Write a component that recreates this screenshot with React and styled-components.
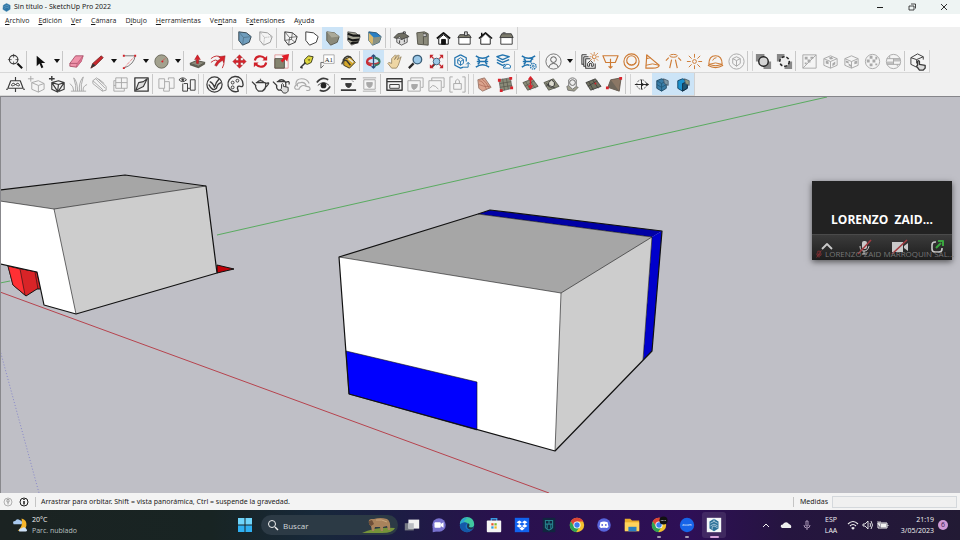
import React from "react"
import { useState } from "react";
import styled, { createGlobalStyle } from "styled-components";

const GlobalStyle = createGlobalStyle`
  * {
    box-sizing: border-box;
  }

  body {
    margin: 0;
    background: #f0f0f0;
    color: #1b1b1b;
    font-family: "Open Sans", "Noto Sans", sans-serif;
    font-size: 7px;
    line-height: 10px;
  }

  button, input {
    font: inherit;
    color: inherit;
  }
`

const Window = styled.div`
  display: flex;
  flex-direction: column;
  min-height: 100vh;
`

const TitleBar = styled.header`
  display: flex;
  align-items: center;
  gap: 3px;
  height: 14px;
  padding: 0 2px;
  background: #eef4f3;

  h1 {
    flex: 1;
    margin: 0;
    font-family: "Noto Sans", "Open Sans", sans-serif;
    font-size: 7px;
    font-weight: 400;
  }
`

const PlainButton = styled.button`
  display: flex;
  align-items: center;
  justify-content: center;
  border: none;
  padding: 0;
  background: transparent;
  cursor: pointer;
`

const WindowButton = styled(PlainButton)`
  width: 29px;
  height: 14px;

  &:hover {
    background: #dde5e4;
  }
`

const MenuBar = styled.nav`
  display: flex;
  align-items: center;
  gap: 9px;
  height: 13px;
  padding: 0 5px;
  background: #ffffff;

  a {
    color: inherit;
    text-decoration: none;
  }
`

const ToolRow = styled.div`
  display: flex;
  height: 23px;
  padding-left: ${({ $indent }) => $indent || 0}px;
`

const ToolStrip = styled.div`
  display: flex;
  align-items: center;
  padding-left: ${({ $start }) => $start}px;
  background: #f4f4f4;
  border-right: 1px solid #d2d2d2;
  border-bottom: 1px solid #d8d8d8;
  border-left: ${({ $edge }) => ($edge ? '1px solid #d2d2d2' : 'none')};
`

const ToolButton = styled(PlainButton)`
  width: 21px;
  height: 22px;
  color: ${({ $tone }) => $tone || '#3a3a3a'};
  background: ${({ $active }) => ($active ? '#cce4f7' : 'transparent')};

  &:hover {
    background: #dcebf7;
  }
`

const Caret = styled(PlainButton)`
  width: 11px;
  height: 22px;

  &::before {
    content: "";
    border: 3px solid transparent;
    border-top: 4px solid #111111;
    border-bottom: none;
  }
`

const Separator = styled.span`
  width: ${({ $wide }) => ($wide ? 6 : 4)}px;
  height: 20px;
  border-left: 1px solid #c8c8c8;
  border-right: ${({ $wide }) => ($wide ? '1px solid #d4d4d4' : 'none')};
`

const Glyph = styled.svg`
  display: block;
  flex: none;
  width: ${({ $size }) => $size || 20}px;
  height: ${({ $size }) => $size || 20}px;
  fill: none;
  stroke: currentColor;
  stroke-width: 1;
  stroke-linejoin: round;
`

const Viewport = styled.main`
  position: relative;
  flex: 1;
  display: flex;
  min-height: 300px;
  border-top: 1px solid #85858a;
  border-left: 1px solid #88888c;
  background: #bfbfc6;
`

const Scene = styled.svg`
  flex: 1;
  width: 100%;
  min-width: 0;
  stroke-linejoin: round;
`

const CallCard = styled.section`
  position: absolute;
  top: 84px;
  right: 8px;
  display: flex;
  flex-direction: column;
  width: 140px;
  height: 79px;
  background: #222222;
  color: #ffffff;
  box-shadow: 0 2px 6px rgba(0, 0, 0, 0.55);

  h2 {
    flex: 1;
    margin: 0;
    padding-top: 26px;
    font-size: 12px;
    line-height: 26px;
    font-weight: 700;
    text-align: center;
    white-space: pre;
  }
`

const CallControls = styled.div`
  display: flex;
  align-items: center;
  justify-content: space-between;
  height: 26px;
  padding: 0 5px 2px;
  border-top: 1px solid #4a4a4a;
  background: linear-gradient(#3b3b3b, #1d1d1d);
  color: #c9c9c9;
`

const CallName = styled.span`
  position: absolute;
  right: 2px;
  bottom: 1px;
  left: 3px;
  display: flex;
  align-items: center;
  gap: 2px;
  color: #777777;
  font-size: 8px;
  line-height: 11px;
  white-space: nowrap;
`

const StatusBar = styled.footer`
  display: flex;
  align-items: center;
  gap: 6px;
  height: 17px;
  padding: 0 3px;
  background: #f3f3f3;
  font-family: "Noto Sans", "Open Sans", sans-serif;

  p {
    flex: 1;
    margin: 0;
    padding-left: 5px;
    border-left: 1px solid #c4c4c4;
  }

  label {
    padding-left: 6px;
    border-left: 1px solid #c4c4c4;
  }

  input {
    width: 125px;
    height: 12px;
    margin-left: -2px;
    padding: 0 2px;
    border: 1px solid #d4d8dc;
    background: #f0f0f0;
  }
`

const Taskbar = styled.footer`
  display: grid;
  grid-template-columns: 1fr auto 1fr;
  align-items: center;
  height: 30px;
  background: linear-gradient(90deg, #1b2322 0%, #182423 22%, #17283a 33%, #1d1c44 42%, #29114d 52%, #2e0f56 72%, #25153f 82%, #221a34 100%);
  color: #f2f2f2;
  line-height: 11px;
`

const Weather = styled.div`
  display: flex;
  align-items: center;
  gap: 4px;
  padding-left: 12px;

  small {
    display: block;
    font-size: 7px;
    color: #b9c0c0;
  }
`

const Dock = styled.div`
  display: flex;
  align-items: center;
`

const StartButton = styled(PlainButton)`
  width: 29px;
  height: 26px;
  padding-right: 3px;
`

const SearchBox = styled.label`
  display: flex;
  align-items: center;
  gap: 4px;
  width: 137px;
  height: 20px;
  padding: 0 2px 0 6px;
  border-radius: 10px;
  background: #2c3a45;

  input {
    flex: 1;
    min-width: 0;
    border: none;
    padding: 0;
    background: transparent;
    font-size: 8px;
    outline: none;
  }

  input::placeholder {
    color: #d2d7da;
    opacity: 1;
  }
`

const Apps = styled.div`
  display: grid;
  grid-template-columns: repeat(12, 1fr);
  justify-items: center;
  width: 330px;
`

const AppButton = styled(PlainButton)`
  position: relative;
  width: 24px;
  height: 26px;
  border-radius: 3px;
  background: ${({ $state }) => ($state === 'active' ? 'rgba(255, 255, 255, 0.1)' : 'transparent')};

  &::after {
    content: "";
    position: absolute;
    bottom: 0;
    width: ${({ $state }) => ($state === 'active' ? 9 : 4)}px;
    height: 2px;
    border-radius: 1px;
    background: ${({ $state }) => ($state === 'active' ? '#d9a6dd' : '#a79db2')};
    display: ${({ $state }) => ($state ? 'block' : 'none')};
  }
`

const Tray = styled.div`
  display: flex;
  align-items: center;
  justify-content: flex-end;
  padding-right: 12px;
  text-align: center;

  time {
    width: 44px;
    margin-right: 4px;
    text-align: right;
  }
`

const TrayButton = styled(PlainButton)`
  width: ${({ $width }) => $width || 15}px;
  height: 22px;
`

const Badge = styled.span`
  width: 10px;
  height: 10px;
  border-radius: 5px;
  background: #cf9ad6;
  color: #3c2050;
  font-size: 7px;
  line-height: 10px;
`

const box = 'M4 3L12 4L17 8L15 14L8 17L4 12Z'
const boxEdges = 'M4 3L9 9L8 17M9 9L17 8'
const cube = 'M3 7L10 4L17 7V14L10 17L3 14ZM3 7L10 10L17 7M10 10V17'
const terrain = 'M2 8L12 4L18 12L7 16Z'

const icons = {
  xray: <><path d={box} fill="#6f9dbd" stroke="#34444f" /><path d={boxEdges} stroke="#4f7288" strokeWidth="0.8" /></>,
  backEdges: <><path d={box} stroke="#9a9a9a" /><path d={boxEdges} stroke="#a8a8a8" strokeDasharray="1 1" /></>,
  wireframe: <><path d={box} /><path d="M4 3L9 9L8 17M9 9L17 8M4 12L11 11L15 14M11 11L12 4" strokeWidth="0.7" /></>,
  hiddenLine: <path d={box} fill="#fff" />,
  shaded: <><path d={box} fill="#8b8a7b" stroke="#5d5c50" /><path d="M4 3L12 4L17 8L9 9Z" fill="#aaa999" stroke="none" /></>,
  textures: <><path d={box} fill="#a5a495" stroke="#444" strokeWidth="0.8" /><path d="M4 5L10 7L17 7M4 10L9 12L16 11M7 15L15 14" stroke="#161616" strokeWidth="2.2" /></>,
  monochrome: <><path d={box} fill="#2a7fc4" stroke="#2b5878" /><path d="M4 4L9 9L8 17L4 12Z" fill="#d9b96d" stroke="none" /><path d="M9 9L17 8L15 14L8 17Z" fill="#8c9282" stroke="none" /></>,
  iso: <><path d="M5 9V14L10 17L16 14V8L10 11Z" fill="#ddd" strokeWidth="0.8" /><path d="M2 9L6 5L12 4L18 8L10 11L8 8L5 10Z" fill="#6f6e62" strokeWidth="0.8" /><path d="M12 5V3H14V5M8 12V15M13 11V14" /></>,
  top: <><path d="M4 4L12 3L16 5V17L5 16Z" fill="#8b8a7b" stroke="#55544a" /><path d="M11 4V16" stroke="#55544a" /><path d="M11 5H14V8H11" fill="#ccc" strokeWidth="0.8" /></>,
  front: <><path d="M3 10L10 4L17 10" strokeWidth="1.8" stroke="#111" /><path d="M5 10V16H15V10L10 6Z" fill="#fff" stroke="#111" /><path d="M8 16V11H12V16Z" fill="#111" stroke="#111" /></>,
  right: <><path d="M4 9V16H16V9" fill="#fff" /><path d="M3 9L5 6H15L17 9Z" fill="#7d7c6d" /><path d="M10 7V3H13V7Z" fill="#ccc" /></>,
  back: <><path d="M5 10V16H15V10L10 5Z" fill="#fff" stroke="#222" /><path d="M3 10L10 4L17 10M6 7V4" strokeWidth="1.5" stroke="#111" /></>,
  left: <><path d="M4 9V16H16V9" fill="#fff" /><path d="M3 9L5 5H15L17 9Z" fill="#7d7c6d" /><path d="M6 4H9" /></>,

  search: <><circle cx="8" cy="8" r="4.5" strokeWidth="1.2" /><path d="M8 2V6M8 10V13M2 8H6M10 8H13" strokeWidth="0.8" /><path d="M12 12L17 17" strokeWidth="2.2" stroke="#111" /></>,
  select: <path d="M6 4V15L9 12L11 17L13 16L11 11.500H15Z" fill="#111" stroke="none" />,
  eraser: <><path d="M3 12L9 4H17L15 10L10 16L3 15Z" fill="#ef92aa" stroke="#9b3f58" strokeWidth="0.8" /><path d="M3 12L11 12L17 4M11 12L10 16" stroke="#a34a63" strokeWidth="0.8" /><path d="M11 12L17 4L15 10L10 16Z" fill="#d9708d" stroke="none" /></>,
  pencil: <><path d="M3 17L5 12L14 4L16 6L8 14Z" fill="#c9262c" stroke="#6d2222" strokeWidth="0.8" /><path d="M3 17L5 12L8 14Z" fill="#333" stroke="none" /></>,
  arc: <><path d="M4 4H16Q15 13 4 17" stroke="#555" strokeWidth="0.8" /><path d="M4 17L15 5" stroke="#d94a50" strokeDasharray="1 1" /><path d="M3 3H5V5H3ZM15 3H17V5H15ZM3 16H5V18H3Z" fill="#d62128" stroke="none" /></>,
  circle: <><circle cx="10" cy="10" r="7" fill="#a3a28f" stroke="#6d6c5f" /><path d="M10 10L15 6" stroke="#d94a50" strokeDasharray="1 1" /><circle cx="11" cy="10" r="1" fill="#d62128" stroke="none" /></>,
  pushPull: <><path d="M2 12L9 9L18 11L11 15Z" fill="#8b8a7b" stroke="#55544a" /><path d="M2 12V14L11 17L18 13V11L11 15Z" fill="#5f5e52" stroke="none" /><path d="M9 12V8H7L10 3L13 8H11V12Z" fill="#d9222b" stroke="#9c151c" strokeWidth="0.5" /></>,
  followMe: <><path d="M2 7Q8 2 13 6M2 11Q8 6 10 11M15 9Q17 12 14 17" stroke="#c32a30" /><path d="M6 14Q8 9 12 7L10 5L17 4L16 11L14 9Q10 11 8 15Z" fill="#d9222b" stroke="#8e2a2e" strokeWidth="0.5" /></>,
  move: <path d="M10 3L13 6H11V9H14V7L17 10L14 13V11H11V14H13L10 17L7 14H9V11H6V13L3 10L6 7V9H9V6H7Z" fill="#d9222b" stroke="#9c151c" strokeWidth="0.5" />,
  rotate: <><path d="M4 9C5 4 11 3 15 7M16 11C15 16 9 17 5 13" stroke="#cf2029" strokeWidth="2.2" /><path d="M17 4V9H12ZM3 16V11H8Z" fill="#cf2029" stroke="none" /></>,
  scale: <><path d="M3 3H17V17H3Z" stroke="#dd8588" strokeWidth="0.8" /><path d="M3 7H13V17H3Z" fill="#85846f" stroke="#55544a" /><path d="M9 9L12 6L10 4L18 2L16 10L14 8L11 11Z" fill="#e01d27" stroke="none" /></>,
  tape: <><path d="M8 8L12 4L17 5L15 11L11 13L8 12Z" fill="#ddd63e" stroke="#3c3b20" /><path d="M11 8L14 7L13 10Z" fill="#77721f" stroke="none" /><path d="M9 11L4 16L6 17" stroke="#333" strokeWidth="1.6" /></>,
  text: <><path d="M6 3H17V12H6Z" fill="#fff" stroke="#999" strokeWidth="0.8" /><path d="M3 17V11H6M3 17L6 14" stroke="#666" /><text x="7" y="10" fontSize="7" fontFamily="Liberation Serif, serif" fill="#222" stroke="none">A1</text></>,
  paint: <><path d="M5 8L12 5L17 11L11 17L5 14Z" fill="#d4a72c" stroke="#3d3824" /><path d="M4 9Q8 2 13 6M3 13Q4 8 8 9L12 14" stroke="#3a3a33" strokeWidth="1.5" /><path d="M10 7L15 11" stroke="#e8e6da" strokeWidth="1.6" /></>,
  orbit: <><path d="M8 14C1 13 2 7 9 6" stroke="#c92d35" strokeWidth="2.4" /><path d="M11 6C18 7 18 13 11 14" stroke="#34795d" strokeWidth="2.4" /><path d="M4 11Q10 14 16 11" stroke="#b94046" strokeWidth="1.4" /><path d="M10 3V17M8 5L10 3L12 5M8 15L10 17L12 15" stroke="#254a78" strokeWidth="1.4" /></>,
  pan: <path d="M7 17L3 12L4 11L7 12L7 7L11 3L12 4L10 8L14 3L15 4L13 8L17 5L14 14L12 17Z" fill="#eed6a4" stroke="#8d7a54" strokeWidth="0.8" />,
  zoom: <><path d="M8 12L3 17" stroke="#282828" strokeWidth="2.4" /><circle cx="12" cy="8" r="4.500" fill="#9cc9e8" stroke="#3b5e78" strokeWidth="1.4" /></>,
  zoomExtents: <><path d="M9 12L5 16" stroke="#333" strokeWidth="2" /><circle cx="10" cy="10" r="3.500" fill="#9cc9e8" stroke="#476176" /><path d="M3 3H7L3 7ZM17 3V7L13 3ZM3 17V13L7 17ZM17 17H13L17 13Z" fill="#c3242b" stroke="none" /><path d="M4 4L7 7M16 4L13 7M4 16L7 13M16 16L13 13" stroke="#c3242b" strokeWidth="1.4" /></>,
  warehouse: <><path d="M9 3L15 6V10M9 3L3 6V14L9 17L12 16" strokeWidth="1.3" /><path d="M9 6L12 8V12L9 14L6 12V8ZM6 8L9 10L12 8M9 10V14" /><path d="M12 16H17V11M15 13L17 11L19 13" /></>,
  extWarehouse: <path d="M3 4Q10 9 17 4M3 16Q10 11 17 16M4 10H16M5 7Q9 10 5 13M15 7Q11 10 15 13" strokeWidth="1.6" />,
  layout: <><path d="M3 5L9 3L16 5L9 8ZM3 8L9 11L16 8M3 11L9 14L12 13" strokeWidth="1.4" /><path d="M10 17H17Q19 14 15 13Q12 12 12 15Q9 15 10 17Z" fill="#fff" /></>,
  extManager: <><path d="M3 4Q10 9 17 4M3 16Q8 12 11 14M4 10H12M5 7Q9 10 5 13M15 7Q11 9 13 11" strokeWidth="1.6" /><circle cx="15" cy="15" r="3" fill="#f5f5f5" strokeDasharray="1.5 0.8" strokeWidth="1.4" /><circle cx="15" cy="15" r="1" /></>,
  person: <><circle cx="10" cy="10" r="8" strokeWidth="0.8" /><circle cx="10" cy="8" r="3" /><path d="M5 16Q6 12 10 12T15 16" /></>,
  lightGen: <><path d="M4 5V15H6M2 3V13H4M11 7H6V17H16V12M9 5H4M7 3H2" strokeWidth="1.1" /><path d="M8 15V12L11 9L14 12V15H12V12H10V15Z" /><g stroke="#cd7a33"><circle cx="15" cy="5" r="2" /><path d="M15 0V2M15 8V10M10 5H12M18 5H20M11 1L13 3M17 7L19 9M19 1L17 3M11 9L13 7" strokeWidth="0.8" /></g></>,
  rectLight: <path d="M2 4H18L15 11H5ZM10 7V17M8 15L10 17L12 15" strokeWidth="1.2" />,
  sphereLight: <><circle cx="10" cy="10" r="8" strokeWidth="1.2" /><circle cx="10" cy="9" r="5" strokeWidth="1.2" /><path d="M5 11Q10 16 15 11" /></>,
  spotLight: <><path d="M4 3L17 14Q17 17 10 17H3Z" strokeWidth="1.2" /><path d="M3 14Q10 11 17 14M4 3V7L8 6" /></>,
  iesLight: <><ellipse cx="10" cy="4" rx="4" ry="1.5" /><path d="M5 6L2 9M15 6L18 9M8 8L6 17M12 8L14 17" strokeWidth="1.2" /></>,
  omniLight: <><circle cx="10" cy="10" r="2" /><path d="M10 2V6M10 14V18M2 10H6M14 10H18M4 4L7 7M13 13L16 16M16 4L13 7M7 13L4 16" /></>,
  domeLight: <><path d="M3 13Q3 4 10 4T17 13Q10 16 3 13ZM2 14Q10 19 18 14" strokeWidth="1.2" /><path d="M3 13Q10 10 17 13M7 9Q8 6 11 6" /></>,
  meshLight: <><circle cx="10" cy="10" r="8" /><path d="M6 7L10 5L14 7V12L10 15L6 12ZM6 7L10 9L14 7M10 9V15" /></>,
  solidBlend: <><path d="M2 2H11V10H2ZM10 10H18V18H10Z" fill="#898989" stroke="none" /><circle cx="10" cy="10" r="5" fill="#d5d5d5" strokeWidth="1.5" stroke="#222" /></>,
  dashBlend: <><path d="M2 2H10V10H2ZM10 10H18V18H10Z" fill="#898989" stroke="none" /><circle cx="10" cy="10" r="5" fill="#ededed" strokeDasharray="3 2" strokeWidth="1.6" stroke="#222" /></>,
  planeUv: <><path d="M3 3H17V17H3ZM3 17L17 3" /><path d="M5 5H8V8H5ZM8 8H11V11H8ZM11 5H14V7H11ZM5 11H7V13H5Z" fill="currentColor" stroke="none" /></>,
  cubeUv: <><path d={cube} /><path d="M5 9L8 10V13L5 12ZM12 12L15 10V13L12 15ZM8 6L11 5L13 7L10 8Z" fill="currentColor" stroke="none" /></>,
  boxUv: <><path d={cube} /><path d="M4 9L7 10V12L4 11ZM7 12L10 14V16L7 14ZM13 10L16 9V12L13 13Z" fill="currentColor" stroke="none" /></>,
  sphereUv: <><circle cx="10" cy="10" r="7.500" /><path d="M7 4H10V7H7ZM4 8H7V11H4ZM10 8H13V11H10ZM7 12H10V15H7ZM13 5H15V8H13ZM13 12H15V14H13Z" fill="currentColor" stroke="none" /></>,
  roundUv: <><circle cx="10" cy="10" r="7.500" /><path d="M3 7H17M3 13H17M6 4V7M10 7V13M14 13V15" /><path d="M10 7H17V10H10ZM3 10H10V13H3Z" fill="currentColor" stroke="none" opacity="0.7" /></>,
  pickCube: <><path d="M2 6L9 2L15 5V8M2 6V13L8 16M2 6L8 8L15 5M8 8V12" /><path d="M9 10Q10 8 11 10V13L17 14V17L15 19H11L8 15L9 14Z" fill="#ddd" strokeWidth="1.4" /></>,

  infinitePlane: <><path d="M5 6H15L18 14H2ZM10 2V6M10 14V18M2 15H0M18 15H20" strokeWidth="1.2" /><path d="M10 10Q7 7 6 10T10 10Q13 7 14 10T10 10" /></>,
  exportProxy: <><path d="M5 8L12 6L18 9V15L12 18L5 15ZM5 8L12 11L18 9M12 11V18" /><path d="M4 1V7M1 4H7" /></>,
  importProxy: <><path d="M4 8L11 6L17 8V15L10 18L4 15ZM4 8L11 10L17 8M11 10L10 18M4 8L10 17M11 17L17 8" strokeWidth="1.2" /><path d="M4 1V6M1 4H7" strokeWidth="1.5" /></>,
  fur: <path d="M9 17Q9 7 5 3Q8 12 7 17M11 17Q10 8 15 2Q12 11 13 17M5 17Q5 12 1 9M15 17Q14 12 19 10M2 17H18" />,
  clipper: <path d="M3 6L7 3L17 12V16L13 17L3 9ZM3 6L13 15V17M9 4L15 9M6 4L16 14" />,
  tile: <path d="M5 3H17V14H5ZM5 8H17M11 3V14M5 6H3V17H14V14M3 11H5" />,
  decal: <><path d="M3 3H17V17H3Z" strokeWidth="1.4" /><path d="M4 16L7 8L12 7L16 4L12 12Z" fill="#ddd" strokeWidth="1.2" /></>,
  scatter: <path d="M2 4H8V14H2ZM8 7H13V17H7V14M12 5V3H18V14H13" />,
  viewScatter: <><path d="M6 9H10V17H5V9M10 14H13V5H18V16H13V14" /><path d="M1 5Q5 1 9 5Q5 9 1 5Z" /><circle cx="5" cy="5" r="1" fill="currentColor" /></>,
  vray: <><circle cx="10" cy="10" r="8" strokeWidth="1.3" /><path d="M5 7Q8 8 10 13Q11 8 15 4M4 10Q8 18 12 14Q13 9 17 8" strokeWidth="1.5" /></>,
  assets: <><path d="M13 17A8 8 0 1 1 18 10Q18 13 15 12T12 14Z" strokeWidth="1.4" /><circle cx="7" cy="8" r="1.500" /><circle cx="12" cy="6" r="1.500" /><circle cx="7" cy="13" r="1.500" /></>,
  teapot: <path d="M5 8H15Q17 14 12 17H8Q4 14 5 11L1 7M15 9Q20 7 18 10T15 13M6 8Q10 4 14 8M10 5V4" strokeWidth="1.3" />,
  handTeapot: <><path d="M5 7H14Q16 13 12 16H7Q4 14 5 11L1 7M14 8Q19 5 18 10M6 7Q10 3 14 7" strokeWidth="1.3" /><path d="M10 10Q11 8 12 10V12L17 13V17L15 19H12L9 15L10 14Z" fill="#ddd" /></>,
  cloud: <path d="M3 10Q3 4 9 4T17 9M5 12Q3 8 8 8Q12 7 14 11M7 15H3Q0 13 4 10M6 15Q9 9 14 12Q18 12 18 15Q17 17 14 16" strokeWidth="1.2" />,
  vision: <><path d="M3 8Q8 1 15 5M17 12Q13 19 6 16" strokeWidth="1.8" /><path d="M4 11Q10 5 16 11" /><circle cx="10" cy="11" r="3" fill="#222" stroke="none" /></>,
  renderView: <><path d="M2 4H18M2 16H18" strokeWidth="1.8" /><path d="M7 9H13Q13 12 11 13H9Q7 12 7 9ZM14 6L15 7" fill="currentColor" /></>,
  frameView: <><path d="M3 3H17M3 17H17M4 5H16V15H4Z" /><path d="M7 8H13Q13 12 11 13H9Q7 12 7 8Z" fill="currentColor" /></>,
  buffer: <><path d="M2 4H18V16H2ZM2 7H18" strokeWidth="1.5" /><path d="M5 10H15V14H5Z" /></>,
  batch: <><path d="M5 6V3H18V13H16M2 6H15V17H2Z" /><path d="M6 10H12Q12 14 9 15T6 10Z" fill="currentColor" /></>,
  cosmos: <path d="M5 6V3H18V13H16M2 6H15V17H2ZM3 14L6 11L9 12L12 15" />,
  lockView: <path d="M5 2H2V18H5M15 2H18V18H15M6 9H14V15H6ZM8 9V6Q10 3 12 6V9" />,
  contours: <><path d="M3 5L10 3L17 13L8 17L4 14Z" fill="#dba48e" stroke="#8b6a5c" strokeWidth="0.8" /><path d="M4 6Q9 6 12 15M7 4Q12 7 15 14M4 10Q10 13 16 12" stroke="#a05a48" strokeWidth="0.6" /></>,
  scratch: <><path d="M3 5L15 3L17 14L5 17Z" fill="#8a8b78" stroke="#666" strokeWidth="0.8" /><path d="M7 4L9 16M11 4L13 15M4 9L16 7M4 13L17 11" stroke="#4c4d44" strokeWidth="0.6" /><path d="M2 4H5V7H2ZM14 2H17V5H14ZM4 15H7V18H4ZM15 12H18V15H15Z" fill="#d9222b" stroke="none" /></>,
  smoove: <><path d={terrain} fill="#8a8b78" stroke="#4d4e45" strokeWidth="0.8" /><path d="M5 7L10 16M9 5L15 14M4 12L14 6" stroke="#4d4e45" strokeWidth="0.6" /><path d="M10 3V12M8 5L10 2L12 5M8 11L10 14L12 11" stroke="#d9222b" strokeWidth="1.5" /></>,
  stamp: <><path d={terrain} fill="#8a8b78" stroke="#4d4e45" strokeWidth="0.8" /><path d="M7 12V8L10 5L13 8V11L10 13Z" fill="#dddcd0" stroke="#333" /><path d="M4 9L14 14M4 12L7 10" stroke="#333" strokeWidth="0.8" /></>,
  drape: <><path d="M4 12L8 10L16 13L12 17L5 16Z" fill="#a2a18f" stroke="#666" strokeWidth="0.8" /><path d="M6 11V5Q10 1 14 5V12L10 15Z" fill="#eee" stroke="#777" /><circle cx="10" cy="8" r="3" stroke="#666" /></>,
  addDetail: <><path d={terrain} fill="#6f705f" stroke="#333" strokeWidth="0.8" /><path d="M5 7L10 16M9 5L15 14M4 12L14 6" stroke="#333" strokeWidth="0.7" /><circle cx="12" cy="9" r="1" fill="#d9222b" stroke="none" /></>,
  flipEdge: <><path d="M6 5L17 3L15 17L3 13Z" fill="#8b7765" stroke="#55493f" strokeWidth="0.8" /><path d="M6 5L15 17L3 13Z" fill="#6f675b" stroke="none" /><path d="M15 2H18V5H15ZM1 12H4V15H1Z" fill="#d9222b" stroke="none" /></>,
  section: <><circle cx="10" cy="10" r="5" strokeDasharray="2 1" strokeWidth="0.8" /><path d="M3 10H17M10 5V15" stroke="#222" /><path d="M15 8L18 10L15 12ZM10 8L13 10L10 12Z" fill="#222" stroke="none" /></>,
  sectionPlanes: <><path d="M4 6L9 4L14 6V14L9 17L4 14Z" fill="#397da7" stroke="#234c66" /><path d="M4 6L9 9L14 6M9 9V17M4 10L9 13L14 10" stroke="#1f5371" strokeWidth="0.8" /><path d="M11 4L16 6V11L12 9Z" fill="#7d98a6" stroke="#456" strokeWidth="0.8" /></>,
  sectionFill: <><path d="M4 6L9 4L14 6V14L9 17L4 14Z" fill="#1c93cf" stroke="#174766" /><path d="M9 9L14 7V14L9 17Z" fill="#1d5674" stroke="#123" strokeWidth="0.8" /><path d="M11 4L16 6V11L12 9Z" fill="#8f9a83" stroke="#456" strokeWidth="0.8" /></>,
}

const GREY = '#a9a9a9'
const BLUE = '#2173ae'
const ORANGE = '#cd7a33'

// '|' thin separator, '||' end of one toolbar, 'v' drop-down arrow
const viewTools = [
  ['xray', 'Rayos X'], ['backEdges', 'Aristas posteriores', GREY], '|',
  ['wireframe', 'Alámbrico'], ['hiddenLine', 'Líneas ocultas'], ['shaded', 'Sombreado', null, true],
  ['textures', 'Sombreado con texturas'], ['monochrome', 'Monocromo'], '||',
  ['iso', 'Isométrica'], ['top', 'Planta'], ['front', 'Frente'], ['right', 'Derecha'], ['back', 'Posterior'], ['left', 'Izquierda'],
]

const drawTools = [
  ['search', 'Buscar'], '|', ['select', 'Seleccionar'], 'v', '|',
  ['eraser', 'Borrar'], ['pencil', 'Línea'], 'v', ['arc', 'Arco'], 'v', ['circle', 'Círculo'], 'v', '|',
  ['pushPull', 'Empujar/Tirar'], ['followMe', 'Sígueme'], ['move', 'Mover'], ['rotate', 'Rotar'], ['scale', 'Escala'], '|',
  ['tape', 'Medir'], ['text', 'Texto'], ['paint', 'Pintar'], '|',
  ['orbit', 'Orbitar', null, true], ['pan', 'Desplazar'], ['zoom', 'Zoom'], ['zoomExtents', 'Ver modelo centrado'], '|',
  ['warehouse', '3D Warehouse', BLUE], ['extWarehouse', 'Extension Warehouse', BLUE], ['layout', 'Enviar a LayOut', BLUE], '|',
  ['extManager', 'Administrador de extensiones', BLUE], '|', ['person', 'Cuenta', '#555555'], 'v', '|',
  ['lightGen', 'Light Gen'], ['rectLight', 'Rectangle Light', ORANGE], ['sphereLight', 'Sphere Light', ORANGE],
  ['spotLight', 'Spot Light', ORANGE], ['iesLight', 'IES Light', ORANGE], ['omniLight', 'Omni Light', ORANGE],
  ['domeLight', 'Dome Light', ORANGE], ['meshLight', 'Mesh Light', GREY], '||',
  ['solidBlend', 'Solid Widget'], ['dashBlend', 'Hide Widget'], '|',
  ['planeUv', 'Plane UV', GREY], ['cubeUv', 'Cube UV', GREY], ['boxUv', 'Box UV', GREY], ['sphereUv', 'Sphere UV', GREY], ['roundUv', 'Round UV', GREY], '|',
  ['pickCube', 'Scene Interaction'],
]

const renderTools = [
  ['infinitePlane', 'Infinite Plane'], ['exportProxy', 'Export Proxy', GREY], ['importProxy', 'Import Proxy'],
  ['fur', 'Fur', GREY], ['clipper', 'Clipper', GREY], ['tile', 'Enmesh', GREY], ['decal', 'Decal'], '|',
  ['scatter', 'Scatter', GREY], ['viewScatter', 'Scatter Viewer'], '||',
  ['vray', 'Asset Editor'], ['assets', 'Cosmos'], '|',
  ['teapot', 'Render'], ['handTeapot', 'Interactive Render'], ['cloud', 'Cloud Render', GREY], ['vision', 'Vision'], '|',
  ['renderView', 'Viewport Render'], ['frameView', 'Viewport Region', GREY], '|',
  ['buffer', 'Frame Buffer'], ['batch', 'Batch Render', GREY], ['cosmos', 'Batch Cloud', GREY], ['lockView', 'Lock Camera', GREY], '||',
  ['contours', 'Desde contornos'], ['scratch', 'Desde cero'], '|',
  ['smoove', 'Esculpir'], ['stamp', 'Estampar'], ['drape', 'Proyectar'], ['addDetail', 'Añadir detalle'], ['flipEdge', 'Voltear arista'], '||',
  ['section', 'Plano de sección'], ['sectionPlanes', 'Planos de sección', null, true], ['sectionFill', 'Relleno de sección', null, true],
]

// [before, underlined letter, after]
const menus = [
  ['', 'A', 'rchivo'], ['', 'E', 'dición'], ['', 'V', 'er'], ['', 'C', 'ámara'], ['D', 'i', 'bujo'],
  ['', 'H', 'erramientas'], ['Ve', 'n', 'tana'], ['E', 'x', 'tensiones'], ['A', 'y', 'uda'],
]

const chrome = <>
  <circle cx="10" cy="10" r="8" fill="#f2c12e" />
  <path d="M3 6A8 8 0 0 1 17 6H10L7 12Z" fill="#dd4437" />
  <path d="M3 6A8 8 0 0 0 9 18L13 12H7Z" fill="#2fa254" />
  <circle cx="10" cy="10" r="4" fill="#fff" />
  <circle cx="10" cy="10" r="3" fill="#3b7ded" />
</>

const apps = [
  { name: 'Vista de tareas', art: <><path d="M2 8H12V16H2Z" fill="#777b84" /><path d="M6 4H18V14H6Z" fill="#f1f1f1" /><path d="M6 8H12V14H6Z" fill="#b9bcc2" /></> },
  { name: 'Chat', art: <><circle cx="10" cy="10" r="7.500" fill="#7872ce" /><path d="M3 12L3 18L9 17Z" fill="#7872ce" /><rect x="5" y="7" width="7" height="6" rx="1" fill="#fff" /><path d="M12 9L15 7V13L12 11Z" fill="#fff" /></> },
  { name: 'Edge', art: <><circle cx="10" cy="10" r="8" fill="#1a75c8" /><path d="M2 9A8 8 0 0 1 18 9Q18 13 14 13Q11 13 12 10Q10 5 2 9Z" fill="#40c8a0" /><path d="M2 9A8 8 0 0 1 11 2Q6 5 7 7Q4 7 2 9Z" fill="#2ba3d8" /><path d="M2 10Q5 5 11 8Q7 10 9 14Q12 17 16 15Q11 20 6 17Q2 15 2 10Z" fill="#1559a8" /><path d="M11 8Q14 9 12 12Q15 14 18 11Q17 15 13 15Q8 13 11 8Z" fill="#20384d" /></> },
  { name: 'Store', art: <><path d="M7 6V3H13V6" fill="none" stroke="#3a9be0" strokeWidth="1.500" /><rect x="2" y="5" width="16" height="13" rx="1" fill="#f4f4f4" /><path d="M7 8H9.500V10.500H7Z" fill="#e4532b" /><path d="M10.500 8H13V10.500H10.500Z" fill="#7fba2f" /><path d="M7 11.500H9.500V14H7Z" fill="#2b9fe0" /><path d="M10.500 11.500H13V14H10.500Z" fill="#f5b822" /></> },
  { name: 'Dropbox', art: <><path d="M2 2H18V18H2Z" fill="#1163f0" /><path d="M7 5L10 7L7 9L4 7ZM13 5L16 7L13 9L10 7ZM7 9L10 11L7 13L4 11ZM13 9L16 11L13 13L10 11ZM10 12L13 14L10 16L7 14Z" fill="#fff" /></> },
  { name: 'Mouse', art: <><rect x="3" y="2" width="14" height="16" fill="#10263f" /><path d="M6 5H14V13Q10 18 6 13ZM10 5V9M6 9H14M8 9V14M12 9V14" fill="none" stroke="#27828d" strokeWidth="1.200" /></> },
  { name: 'Chrome', art: chrome },
  { name: 'Discord', art: <><circle cx="10" cy="10" r="7.500" fill="#5865dc" /><path d="M6 7Q10 5 14 7L15 12Q13 14 12 13H8Q7 14 5 12Z" fill="#fff" /><circle cx="8" cy="10" r="1" fill="#5865dc" /><circle cx="12" cy="10" r="1" fill="#5865dc" /></> },
  { name: 'Explorador de archivos', art: <><path d="M2 3H8L10 5H18V16H2Z" fill="#e9ad2c" /><path d="M2 7H18V17H2Z" fill="#ffd35c" /><path d="M6 12H15V17H6Z" fill="#2a7fc1" /></> },
  { name: 'Chrome (perfil)', state: 'open', art: <>{chrome}<circle cx="15" cy="5" r="4.500" fill="#111" /><path d="M12 5H18" stroke="#bbb" strokeDasharray="1 0.5" /></> },
  { name: 'Zoom', state: 'open', art: <><circle cx="10" cy="10" r="8" fill="#1764e8" /><text x="10" y="11" fontSize="4" textAnchor="middle" fill="#fff">zoom</text></> },
  { name: 'SketchUp', state: 'active', art: <><path d="M2 2H18V18H2Z" fill="#f3f6f8" /><path d="M5 6L10 3L15 6V14L10 17L5 14Z" fill="#2b7198" /><path d="M6 8L10 6L14 8M6 11L10 9L14 11M8 15V12L10 11L14 13M10 3V6" fill="none" stroke="#cfe3ee" strokeWidth="0.8" /></> },
]

const Tools = ({ label, items, start, edge }) => (
  <ToolStrip role="toolbar" aria-label={label} $start={start} $edge={edge}>
    {items.map((item, i) => {
      if (item === '|' || item === '||') return <Separator key={i} $wide={item === '||'} />
      if (item === 'v') return <Caret key={i} type="button" aria-label="Más opciones" />

      const [icon, name, tone, active] = item
      return (
        <ToolButton key={i} type="button" aria-label={name} $tone={tone} $active={active}>
          <Glyph viewBox="0 0 20 20" $size={19} aria-hidden="true">{icons[icon]}</Glyph>
        </ToolButton>
      )
    })}
  </ToolStrip>
)

const Model = () => (
  <Scene viewBox="1 0 959 396" preserveAspectRatio="xMinYMin slice" role="img" aria-label="Modelo">
    <path d="M0 186L10 184M217 138L827 0" stroke="#3fa645" strokeWidth="0.8" />
    <path d="M0 195L549 396" stroke="#b4232f" strokeWidth="0.8" />
    <path d="M0 253L39 396" stroke="#7777c9" strokeWidth="0.8" strokeDasharray="1 2" />

    <g stroke="#111111">
      <path d="M217 168L234 172L217 176Z" fill="#c00008" />
      <path d="M8 169L37 175L41 192L37 192L26 199L13 188Z" fill="#d82427" />
      <path d="M8 169L20 172L25 198L13 188Z" fill="#ff3034" strokeWidth="0.6" />
      <path d="M35 175L38 192" strokeWidth="0.6" />
      <path d="M0 93L125 78L206 89L54 112L0 104Z" fill="#a6a6a6" stroke="none" />
      <path d="M54 112L206 89L217 176L76 217Z" fill="#cdcdcd" stroke="none" />
      <path d="M0 104L54 112L76 217L44 208L37 175L0 167Z" fill="#ffffff" stroke="none" />
      <path d="M0 104L54 112L206 89M54 112L76 217" fill="none" strokeWidth="0.6" />
      <path d="M0 93L125 78L206 89L217 176L76 217L44 208L37 175L0 167" fill="none" strokeWidth="1.2" />
    </g>

    <g stroke="#111111">
      <path d="M478 117L490 113L662 134L652 140Z" fill="#0000a6" stroke="none" />
      <path d="M652 140L662 134L652 254L643 263Z" fill="#0000cc" stroke="none" />
      <path d="M339 160L478 117L652 140L561 196Z" fill="#a6a6a6" stroke="none" />
      <path d="M561 196L652 140L643 263L555 354Z" fill="#cdcdcd" stroke="none" />
      <path d="M339 160L561 196L555 354L349 297Z" fill="#ffffff" stroke="none" />
      <path d="M346 254L477 285L477 333L349 297Z" fill="#0000ff" strokeWidth="0.6" />
      <path d="M339 160L561 196L652 140M561 196L555 354M478 117L652 140L643 263" fill="none" strokeWidth="0.6" />
      <path d="M339 160L478 117L490 113L662 134L652 254L555 354L349 297Z" fill="none" strokeWidth="1.2" />
    </g>
  </Scene>
)

const Call = () => (
  <CallCard aria-label="Videollamada">
    <h2>{'LORENZO  ZAID...'}</h2>
    <CallControls>
      <PlainButton type="button" aria-label="Contraer">
        <Glyph viewBox="0 0 20 20"><path d="M5 12L10 7L15 12" strokeWidth="1.8" /></Glyph>
      </PlainButton>
      <PlainButton type="button" aria-label="Activar micrófono">
        <Glyph viewBox="0 0 20 20">
          <rect x="8" y="4" width="5" height="8" rx="2" fill="currentColor" stroke="none" />
          <path d="M6 9Q6 14 10 14T15 9M10 14V17M8 17H13" />
          <path d="M4 17L17 3" stroke="#a33b40" strokeWidth="1.6" />
        </Glyph>
      </PlainButton>
      <PlainButton type="button" aria-label="Activar cámara">
        <Glyph viewBox="0 0 20 20">
          <path d="M2 5H13V15H2ZM14 9L18 6V14L14 11Z" fill="currentColor" stroke="none" />
          <path d="M2 17L17 3" stroke="#a33b40" strokeWidth="1.6" />
        </Glyph>
      </PlainButton>
      <PlainButton type="button" aria-label="Compartir pantalla">
        <Glyph viewBox="0 0 20 20">
          <path d="M9 5H8Q5 5 5 8V12Q5 15 8 15H12Q15 15 15 12V11" strokeWidth="1.6" />
          <path d="M9 11L14 6M11 4H16V9" stroke="#3aa53e" strokeWidth="2" />
        </Glyph>
      </PlainButton>
    </CallControls>
    <CallName>
      <Glyph viewBox="0 0 20 20" $size={8}>
        <path d="M7 3H13V11H7ZM4 9Q4 15 10 15T16 9M10 15V19M4 19L16 1" stroke="#8c3034" strokeWidth="2" />
      </Glyph>
      LORENZO ZAID MARROQUIN SAL...
    </CallName>
  </CallCard>
)

const App = () => {

  const [measure, setMeasure] = useState('')
  const [query, setQuery] = useState('')

  return (
    <>
      <GlobalStyle />
      <Window>
        <TitleBar>
          <Glyph viewBox="0 0 20 20" $size={9}>
            <path d="M3 5L10 1L18 5V14L10 19L2 14Z" fill="#2c76a6" stroke="#2c76a6" />
            <path d="M5 8L11 5L16 8M5 12L11 9L16 12" stroke="#8ab9d4" />
          </Glyph>
          <h1>Sin título - SketchUp Pro 2022</h1>
          <WindowButton type="button" aria-label="Minimizar">
            <Glyph viewBox="0 0 10 10" $size={10}><path d="M2 5.500H8" /></Glyph>
          </WindowButton>
          <WindowButton type="button" aria-label="Restaurar">
            <Glyph viewBox="0 0 10 10" $size={10}><path d="M2 4H7V8H2ZM4 2H8.500V6.500" strokeWidth="0.8" /></Glyph>
          </WindowButton>
          <WindowButton type="button" aria-label="Cerrar">
            <Glyph viewBox="0 0 10 10" $size={10}><path d="M2 2L8 8M8 2L2 8" strokeWidth="0.9" /></Glyph>
          </WindowButton>
        </TitleBar>

        <MenuBar>
          {menus.map(([before, key, after]) => (
            <a key={before + key + after} href="#menu">{before}<u>{key}</u>{after}</a>
          ))}
        </MenuBar>

        <ToolRow $indent={232}>
          <Tools label="Estilos y vistas" items={viewTools} start={1} edge />
        </ToolRow>
        <ToolRow>
          <Tools label="Herramientas" items={drawTools} start={5} />
        </ToolRow>
        <ToolRow>
          <Tools label="Render y terreno" items={renderTools} start={5} />
        </ToolRow>

        <Viewport>
          <Model />
          <Call />
        </Viewport>

        <StatusBar>
          <Glyph viewBox="0 0 20 20" $size={10} color="#a0a0a0">
            <circle cx="10" cy="10" r="8" strokeWidth="1.6" /><path d="M8 5H12V10H8ZM10 10V15" strokeWidth="2" />
          </Glyph>
          <Glyph viewBox="0 0 20 20" $size={10}>
            <circle cx="10" cy="10" r="8" strokeWidth="2" /><path d="M10 4V6M10 8V15" strokeWidth="3" />
          </Glyph>
          <p>Arrastrar para orbitar. Shift = vista panorámica, Ctrl = suspende la gravedad.</p>
          <label htmlFor="measure">Medidas</label>
          <input
            type="text"
            id="measure"
            value={measure}
            onChange={(e) => setMeasure(e.currentTarget.value)}
          />
        </StatusBar>

        <Taskbar>
          <Weather>
            <Glyph viewBox="0 0 20 20" $size={16}>
              <path d="M12 2Q19 4 18 11Q16 19 7 17Q14 13 12 2Z" fill="#f7b62c" stroke="none" />
              <path d="M2 9Q0 5 4 5Q6 1 10 4Q14 5 12 9Z" fill="#a9c9ef" stroke="none" />
              <path d="M9 18Q8 14 12 14Q16 11 18 15Q20 18 17 18Z" fill="#cfe2f7" stroke="none" />
            </Glyph>
            <div>
              20°C
              <small>Parc. nublado</small>
            </div>
          </Weather>

          <Dock>
            <StartButton type="button" aria-label="Inicio">
              <Glyph viewBox="0 0 16 16" $size={16}>
                <path d="M1 1H7.500V7.500H1ZM8.500 1H15V7.500H8.500Z" fill="#6fd5fb" stroke="none" />
                <path d="M1 8.500H7.500V15H1ZM8.500 8.500H15V15H8.500Z" fill="#2fb0f2" stroke="none" />
              </Glyph>
            </StartButton>
            <SearchBox htmlFor="search">
              <Glyph viewBox="0 0 12 12" $size={12}>
                <circle cx="5" cy="5" r="3.500" /><path d="M8 8L11 11" strokeWidth="1.4" />
              </Glyph>
              <input
                type="text"
                id="search"
                placeholder="Buscar"
                value={query}
                onChange={(e) => setQuery(e.currentTarget.value)}
              />
              <svg width="34" height="20" viewBox="0 0 34 20" aria-hidden="true">
                <path d="M0 18Q12 12 33 13Q31 18 20 18Z" fill="#77943a" />
                <path d="M7 5L9 4L12 4Q18 2 25 4Q29 6 28 15H26L25 11L21 12V16H19L18 12H13L12 16H10L9 11Q6 9 7 5Z" fill="#a9835c" />
                <path d="M7 6L10 5L12 9L9 11L7 9Z" fill="#6e4f38" />
                <path d="M14 5Q20 4 25 7" stroke="#c9a67c" fill="none" />
              </svg>
            </SearchBox>
            <Apps>
              {apps.map(({ name, art, state }) => (
                <AppButton key={name} type="button" aria-label={name} $state={state}>
                  <svg width="18" height="18" viewBox="0 0 20 20" aria-hidden="true">{art}</svg>
                </AppButton>
              ))}
            </Apps>
          </Dock>

          <Tray>
            <TrayButton type="button" aria-label="Iconos ocultos" $width={20}>
              <Glyph viewBox="0 0 12 12" $size={12}><path d="M3 8L6 5L9 8" /></Glyph>
            </TrayButton>
            <TrayButton type="button" aria-label="OneDrive" $width={20}>
              <Glyph viewBox="0 0 12 12" $size={12}><path d="M2 9Q0 8 1 6Q3 6 4 4Q7 2 9 5Q12 6 11 9Z" fill="#eeeeee" stroke="none" /></Glyph>
            </TrayButton>
            <TrayButton type="button" aria-label="Micrófono" $width={21}>
              <Glyph viewBox="0 0 12 12" $size={12} color="#b9a5c4"><path d="M5 2H7V7H5ZM3 6Q3 9 6 9T9 6M6 9V11" strokeWidth="0.9" /></Glyph>
            </TrayButton>
            <TrayButton type="button" $width={28}>ESP<br />LAA</TrayButton>
            <TrayButton type="button" aria-label="Red">
              <Glyph viewBox="0 0 12 12" $size={12}><path d="M1 5Q6 0 11 5M3 7Q6 4 9 7M5 9Q6 8 7 9L6 10Z" strokeWidth="1.1" /></Glyph>
            </TrayButton>
            <TrayButton type="button" aria-label="Volumen">
              <Glyph viewBox="0 0 12 12" $size={12}><path d="M1 5H3L6 2V10L3 7H1ZM8 4Q9 6 8 8M9 2Q12 6 9 10" strokeWidth="0.9" /></Glyph>
            </TrayButton>
            <TrayButton type="button" aria-label="Batería">
              <Glyph viewBox="0 0 12 12" $size={12}><path d="M1 4H10V9H1ZM11 6V7" /><path d="M4 5H9V8H4ZM1 2V5M3 2V5M1 5H3V8" fill="currentColor" strokeWidth="0.8" /></Glyph>
            </TrayButton>
            <time dateTime="2023-05-03T21:19">21:19<br />3/05/2023</time>
            <Badge>6</Badge>
          </Tray>
        </Taskbar>
      </Window>
    </>
  );
};

export default App;
